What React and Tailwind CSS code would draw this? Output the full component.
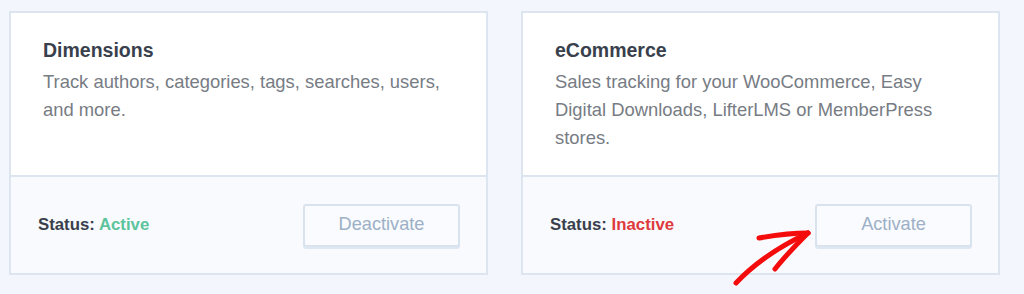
const addons = [
  {
    title: "Dimensions",
    text: "Track authors, categories, tags, searches, users, and more.",
    active: true,
  },
  {
    title: "eCommerce",
    text: "Sales tracking for your WooCommerce, Easy Digital Downloads, LifterLMS or MemberPress stores.",
    active: false,
  },
];

const AddonCard = ({ title, text, active }) => {
  return (
    <div className="w-[479px] h-[264px] border-2 border-[#dce5f0] bg-white flex flex-col">
      <div className="h-[162px] px-[32px] pt-[26px]">
        <h3 className="text-[19.5px] leading-[23px] font-bold text-[#393f4c]">{title}</h3>
        <p className="mt-[6px] max-w-[410px] text-[18.4px] leading-[28px] text-[#777c84]">{text}</p>
      </div>
      <div className="flex-1 border-t-2 border-[#dce5f0] bg-[#f8fafe] flex items-center justify-between pl-[27px] pr-[26px]">
        <p className="text-[16.8px] font-bold text-[#393f4c]">
          Status:{" "}
          <span className={active ? "text-[#5cc49b]" : "text-[#df3a3d]"}>
            {active ? "Active" : "Inactive"}
          </span>
        </p>
        <button className="w-[157px] h-[43px] rounded-[3px] border-2 border-[#d9e3ef] bg-[#f9fbfe] shadow-[0_2px_0_#dfe7f1] text-[18.2px] text-[#9db0c6]">
          {active ? "Deactivate" : "Activate"}
        </button>
      </div>
    </div>
  );
};

export default function App() {
  return (
    <div
      className="relative h-[294px] bg-[#f3f6fc] pt-[11px] pl-[9px] flex gap-[33px]"
      style={{ fontFamily: '"Liberation Sans", Arial, sans-serif' }}
    >
      {addons.map((a) => (
        <AddonCard key={a.title} {...a} />
      ))}
      {/* red hand-drawn arrow pointing at Activate */}
      <svg className="absolute left-0 top-0 pointer-events-none" width="1024" height="294" viewBox="0 0 1024 294">
        <g fill="none" stroke="#f40b0b" strokeWidth="5" strokeLinecap="round" strokeLinejoin="round">
          <path d="M736 283 C752 266 772 250 808 233" />
          <path d="M759 238 C776 235 792 233 808 233" />
          <path d="M775 269 C786 255 797 244 808 233" />
        </g>
      </svg>
    </div>
  );
}
